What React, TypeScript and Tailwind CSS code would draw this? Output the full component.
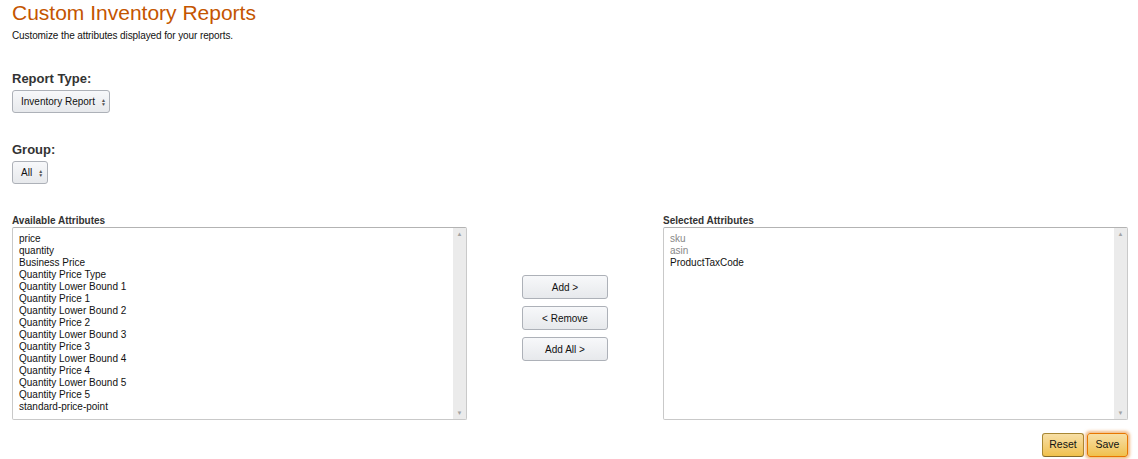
const available = [
  "price",
  "quantity",
  "Business Price",
  "Quantity Price Type",
  "Quantity Lower Bound 1",
  "Quantity Price 1",
  "Quantity Lower Bound 2",
  "Quantity Price 2",
  "Quantity Lower Bound 3",
  "Quantity Price 3",
  "Quantity Lower Bound 4",
  "Quantity Price 4",
  "Quantity Lower Bound 5",
  "Quantity Price 5",
  "standard-price-point",
];

const selected = [
  { label: "sku", locked: true },
  { label: "asin", locked: true },
  { label: "ProductTaxCode", locked: false },
];

const SelectBox = ({ label, width }: { label: string; width: string }) => (
  <div
    className={`${width} h-[23px] flex items-center whitespace-nowrap pl-[8px] rounded-[3px] border border-[#adb1b8] bg-gradient-to-b from-[#f7f8fa] to-[#e7e9ec] text-[10px] text-[#111]`}>
    <span>{label}</span>
    <span className="ml-[6px] flex flex-col items-center leading-[4px] text-[5px] text-[#555]">
      <span>▲</span>
      <span>▼</span>
    </span>
  </div>
);

const ListBox = ({ children, width }: { children: React.ReactNode; width: string }) => (
  <div
    className={`${width} h-[193px] flex border border-[#c9c9c9] border-t-[#b3b3b3] rounded-[2px] bg-white`}>
    <div className="flex-1 pl-[6px] pt-[5px] text-[10px] leading-[12px] text-[#111]">
      {children}
    </div>
    <div className="w-[13px] bg-[#ebebeb] flex flex-col justify-between items-center py-[3px] text-[6px] text-[#a3a3a3] leading-none">
      <span>▲</span>
      <span>▼</span>
    </div>
  </div>
);

const MoveButton = ({ label }: { label: string }) => (
  <button className="w-[86px] h-[24px] rounded-[3px] border border-[#adb1b8] bg-gradient-to-b from-[#f7f8fa] to-[#e7e9ec] text-[10px] text-[#111]">
    {label}
  </button>
);

export default function App() {
  return (
    <div className="min-h-screen bg-white pl-[12px] pr-[10px] font-['Liberation_Sans',Arial,sans-serif] text-[#111]">
      <h1 className="pt-[1px] text-[21px] leading-[24px] text-[#c45500]">
        Custom Inventory Reports
      </h1>
      <p className="mt-[5px] text-[10px] leading-[12px] tracking-[-0.1px]">
        Customize the attributes displayed for your reports.
      </p>

      <div className="mt-[29px]">
        <h3 className="text-[13px] font-bold leading-[16px] text-[#333]">Report Type:</h3>
        <div className="mt-[3px]">
          <SelectBox label="Inventory Report" width="w-[98px]" />
        </div>
      </div>

      <div className="mt-[29px]">
        <h3 className="text-[13px] font-bold leading-[16px] text-[#333]">Group:</h3>
        <div className="mt-[3px]">
          <SelectBox label="All" width="w-[36px]" />
        </div>
      </div>

      <div className="mt-[31px] flex">
        <div>
          <div className="text-[10px] font-bold leading-[12px] text-[#333]">
            Available Attributes
          </div>
          <ListBox width="w-[455px]">
            {available.map((a) => (
              <div key={a}>{a}</div>
            ))}
          </ListBox>
        </div>

        <div className="w-[196px] flex flex-col items-center gap-[7px] pt-[60px]">
          <MoveButton label="Add >" />
          <MoveButton label="< Remove" />
          <MoveButton label="Add All >" />
        </div>

        <div>
          <div className="text-[10px] font-bold leading-[12px] text-[#333]">
            Selected Attributes
          </div>
          <ListBox width="w-[465px]">
            {selected.map((s) => (
              <div key={s.label} className={s.locked ? "text-[#888]" : ""}>
                {s.label}
              </div>
            ))}
          </ListBox>
        </div>
      </div>

      <div className="mt-[13px] flex justify-end gap-[3px] w-[1116px]">
        <button className="w-[42px] h-[24px] rounded-[3px] border border-[#a88734] border-b-[#846a29] bg-gradient-to-b from-[#f7dfa5] to-[#f0c14b] text-[10.5px] text-[#111]">
          Reset
        </button>
        <button className="w-[41px] h-[24px] rounded-[3px] border border-[#e77600] bg-gradient-to-b from-[#f7dfa5] to-[#f0c14b] shadow-[0_0_3px_2px_rgba(228,121,17,0.5)] text-[10.5px] text-[#111]">
          Save
        </button>
      </div>
    </div>
  );
}
